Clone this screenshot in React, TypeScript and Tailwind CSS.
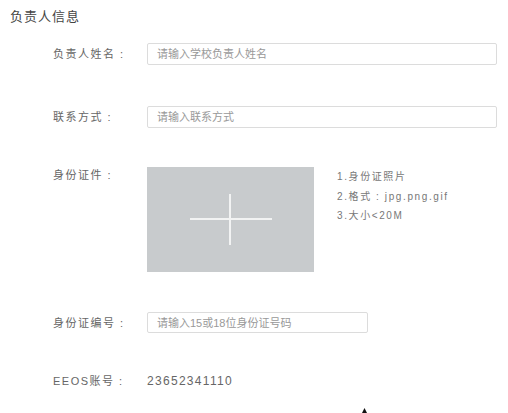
import React from "react";

function Label({ children }: { children: React.ReactNode }) {
  return (
    <div className="w-[147px] shrink-0 pl-[53px] text-[11px] leading-[16px] tracking-[1.5px] text-[#666] whitespace-nowrap">
      {children}
    </div>
  );
}

export default function App() {
  return (
    <div className="relative w-[508px] h-[413px] overflow-hidden bg-white font-['Liberation_Sans','Noto_Sans_CJK_SC',sans-serif]">
      <div className="pl-[10px] pt-[9px] text-[13px] leading-[16px] tracking-[1px] text-[#444]">负责人信息</div>

      <div className="mt-[18px] flex items-center h-[22px]">
        <Label>负责人姓名 :</Label>
        <input
          className="w-[350px] h-[22px] rounded-[2px] border border-[#dcdcdc] px-[9px] text-[11px] text-[#555] outline-none placeholder:text-[#999]"
          placeholder="请输入学校负责人姓名"
        />
      </div>

      <div className="mt-[41px] flex items-center h-[22px]">
        <Label>联系方式 :</Label>
        <input
          className="w-[350px] h-[22px] rounded-[2px] border border-[#dcdcdc] px-[9px] text-[11px] text-[#555] outline-none placeholder:text-[#999]"
          placeholder="请输入联系方式"
        />
      </div>

      <div className="mt-[39px] flex items-start">
        <Label>身份证件 :</Label>
        <div className="relative w-[167px] h-[105px] bg-[#c8cbcd] shrink-0">
          <div className="absolute left-[43px] top-[51px] w-[82px] h-[2px] bg-[#f2f3f3]" />
          <div className="absolute left-[82px] top-[27px] w-[2px] h-[51px] bg-[#f2f3f3]" />
        </div>
        <div className="ml-[23px] text-[10px] leading-[19.5px] tracking-[1.6px] text-[#777] whitespace-nowrap">
          <div>1.身份证照片</div>
          <div>2.格式 : jpg.png.gif</div>
          <div>3.大小&lt;20M</div>
        </div>
      </div>

      <div className="mt-[40px] flex items-center h-[21px]">
        <Label>身份证编号 :</Label>
        <input
          className="w-[221px] h-[21px] rounded-[2px] border border-[#dcdcdc] px-[9px] text-[11px] text-[#555] outline-none placeholder:text-[#999]"
          placeholder="请输入15或18位身份证号码"
        />
      </div>

      <div className="mt-[40px] flex items-center h-[16px]">
        <Label>EEOS账号 :</Label>
        <div className="text-[12px] leading-[16px] tracking-[1.3px] text-[#666]">23652341110</div>
      </div>

      <svg className="absolute left-[362px] top-[408px]" width="5" height="5" viewBox="0 0 5 5">
        <path d="M2.5 0 L5 5 L0 5 Z" fill="#111" />
      </svg>
    </div>
  );
}
